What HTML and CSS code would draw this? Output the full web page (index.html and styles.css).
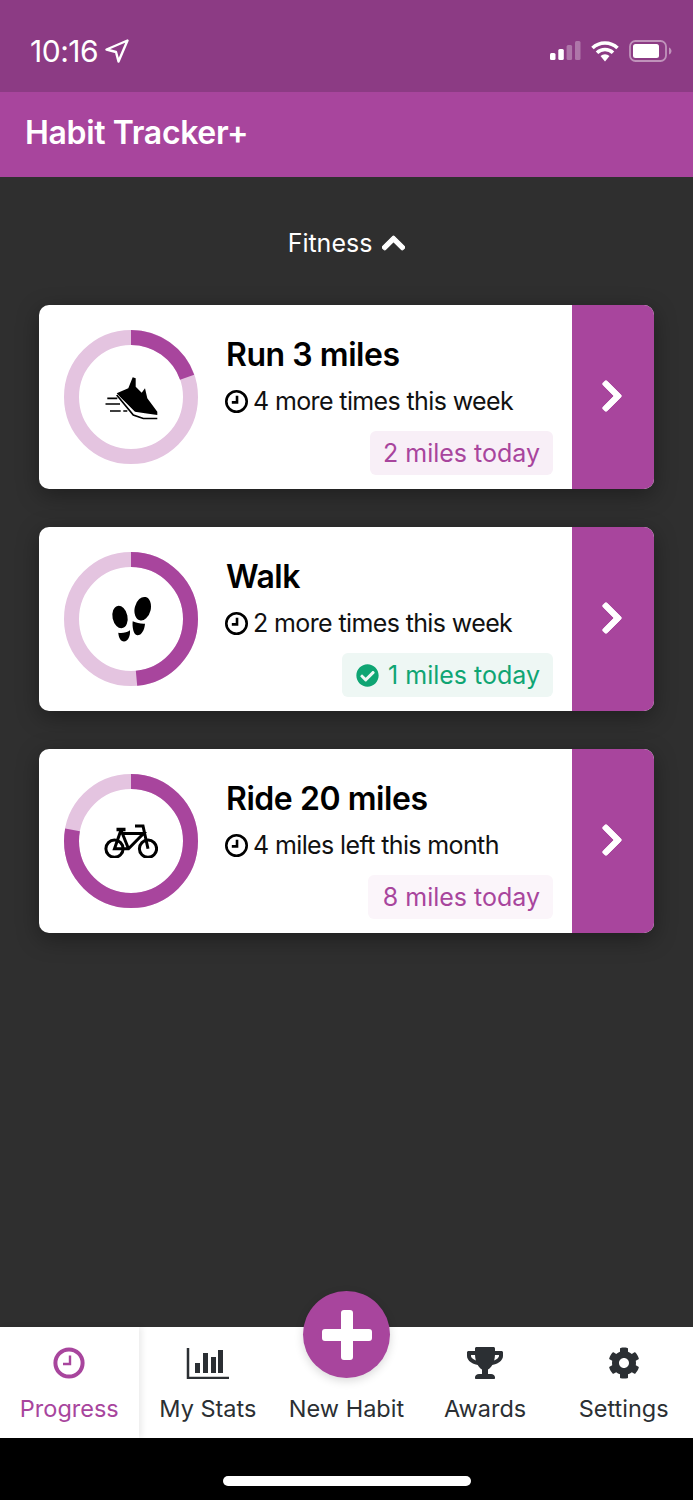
FILE: index.html
```html
<!DOCTYPE html>
<html lang="en">
<head>
    <meta charset="UTF-8">
    <title>Habit Tracker+</title>
    <link rel="stylesheet" href="styles.css">
</head>
<body>
    <div class="status-bar">
        <div class="status-time">
            <span>10:16</span>
            <svg class="location-icon" viewBox="0 0 24 24"><path d="M22.500 1.500 1.500 10.500 11 13 13.500 22.500z"/></svg>
        </div>
        <div class="status-icons">
            <svg class="signal-icon" viewBox="0 0 31 20">
                <rect x="0" y="12" width="5.500" height="7" rx="1.500" fill="#fff"/>
                <rect x="8.300" y="8" width="5.500" height="11" rx="1.500" fill="#fff"/>
                <rect x="16.600" y="4" width="5.500" height="15" rx="1.500" fill="#fff" opacity="0.3"/>
                <rect x="25" y="0" width="5.500" height="19" rx="1.500" fill="#fff" opacity="0.3"/>
            </svg>
            <svg class="wifi-icon" viewBox="0 0 28 22">
                <path d="M1.500 8a18 18 0 0 1 25 0M6 12.700a11.500 11.500 0 0 1 16 0" fill="none" stroke="#fff" stroke-width="3.600"/>
                <path d="M9.500 16a7 7 0 0 1 9 0L14 21.500z" fill="#fff"/>
            </svg>
            <svg class="battery-icon" viewBox="0 0 43 24">
                <rect x="1" y="2" width="36" height="20" rx="5.500" fill="none" stroke="#fff" stroke-opacity="0.45" stroke-width="1.800"/>
                <rect x="4" y="5" width="26" height="14" rx="2.500" fill="#fff"/>
                <path d="M40 8.500c1.500.5 2.500 2 2.500 3.500s-1 3-2.500 3.500z" fill="#fff" opacity="0.45"/>
            </svg>
        </div>
    </div>

    <header class="app-bar">Habit Tracker+</header>

    <main class="content">
        <div class="category">
            <span>Fitness</span>
            <svg class="category-arrow" viewBox="0 0 448 512"><path d="M240.971 130.524l194.343 194.343c9.373 9.373 9.373 24.569 0 33.941l-22.667 22.667c-9.357 9.357-24.522 9.375-33.901.04L224 227.495 69.255 381.516c-9.379 9.335-24.544 9.317-33.901-.04l-22.667-22.667c-9.373-9.373-9.373-24.569 0-33.941L207.03 130.525c9.372-9.373 24.568-9.373 33.941-.001z"/></svg>
        </div>

        <div class="habit-card">
            <div class="habit-main">
                <div class="ring">
                    <svg class="ring-svg" viewBox="0 0 136 136">
                        <circle class="ring-back" cx="68" cy="68" r="59.500"/>
                        <circle class="ring-fill" cx="68" cy="68" r="59.500" pathLength="100" stroke-dasharray="19.600 100"/>
                    </svg>
                    <svg class="shoe-icon" viewBox="0 0 54 43">
                        <path d="M11.700 16.300 23.300 11.300 27.700.3 30.700 1.300 30.700 9.700 36.700 15.700 40 11.300 42.300 21.300 52.300 34.700 52.300 38 40 36.300 30 34.700 15 19.700z"/>
                        <path d="M11.700 18 28.300 38 38.300 41.500H52.300M2.300 21.300H12.300M.5 27H15M5 34H15.700M18.300 34H22.300" fill="none" stroke="#000" stroke-width="1.700"/>
                    </svg>
                </div>
                <div class="habit-info">
                    <div class="habit-title">Run 3 miles</div>
                    <div class="habit-sub">
                        <svg class="clock-icon" viewBox="0 0 24 24"><circle cx="12" cy="12" r="9.800"/><path d="M12.500 6.500V12.800H7.500"/></svg>
                        <span>4 more times this week</span>
                    </div>
                    <div class="habit-today"><span class="today-pill">2 miles today</span></div>
                </div>
            </div>
            <div class="habit-go">
                <svg class="go-arrow" viewBox="0 0 320 512"><path d="M285.476 272.971L91.132 467.314c-9.373 9.373-24.569 9.373-33.941 0l-22.667-22.667c-9.357-9.357-9.375-24.522-.04-33.901L188.505 256 34.484 101.255c-9.335-9.379-9.317-24.544.04-33.901l22.667-22.667c9.373-9.373 24.569-9.373 33.941 0L285.475 239.03c9.373 9.372 9.373 24.568.001 33.941z"/></svg>
            </div>
        </div>

        <div class="habit-card">
            <div class="habit-main">
                <div class="ring">
                    <svg class="ring-svg" viewBox="0 0 136 136">
                        <circle class="ring-back" cx="68" cy="68" r="59.500"/>
                        <circle class="ring-fill" cx="68" cy="68" r="59.500" pathLength="100" stroke-dasharray="48.500 100"/>
                    </svg>
                    <svg class="steps-icon" viewBox="0 0 42 46">
                        <ellipse cx="10" cy="21" rx="7.500" ry="11.300" transform="rotate(-12 10 21)"/>
                        <path d="M8.300 36.700C12 37.500 17 36.500 20 34.300 20.500 40 18 45.500 14 45.500 10.500 45.500 8.500 41 8.300 36.700z"/>
                        <ellipse cx="32.700" cy="12.700" rx="8" ry="12" transform="rotate(14 32.700 12.700)"/>
                        <path d="M22.700 25.300C26.500 27 31 28 35 27.700 34.500 34 31.500 39.500 27.300 39.300 23.500 39 22 31 22.700 25.300z"/>
                    </svg>
                </div>
                <div class="habit-info">
                    <div class="habit-title">Walk</div>
                    <div class="habit-sub">
                        <svg class="clock-icon" viewBox="0 0 24 24"><circle cx="12" cy="12" r="9.800"/><path d="M12.500 6.500V12.800H7.500"/></svg>
                        <span>2 more times this week</span>
                    </div>
                    <div class="habit-today">
                        <span class="today-pill done">
                            <svg class="check-icon" viewBox="0 0 512 512"><path d="M504 256c0 136.967-111.033 248-248 248S8 392.967 8 256 119.033 8 256 8s248 111.033 248 248zM227.314 387.314l184-184c6.248-6.248 6.248-16.379 0-22.627l-22.627-22.627c-6.248-6.249-16.379-6.249-22.628 0L216 308.118l-70.059-70.059c-6.248-6.248-16.379-6.248-22.628 0l-22.627 22.627c-6.248 6.248-6.248 16.379 0 22.627l104 104c6.249 6.249 16.379 6.249 22.628.001z"/></svg>
                            1 miles today
                        </span>
                    </div>
                </div>
            </div>
            <div class="habit-go">
                <svg class="go-arrow" viewBox="0 0 320 512"><path d="M285.476 272.971L91.132 467.314c-9.373 9.373-24.569 9.373-33.941 0l-22.667-22.667c-9.357-9.357-9.375-24.522-.04-33.901L188.505 256 34.484 101.255c-9.335-9.379-9.317-24.544.04-33.901l22.667-22.667c9.373-9.373 24.569-9.373 33.941 0L285.475 239.03c9.373 9.372 9.373 24.568.001 33.941z"/></svg>
            </div>
        </div>

        <div class="habit-card">
            <div class="habit-main">
                <div class="ring">
                    <svg class="ring-svg" viewBox="0 0 136 136">
                        <circle class="ring-back" cx="68" cy="68" r="59.500"/>
                        <circle class="ring-fill" cx="68" cy="68" r="59.500" pathLength="100" stroke-dasharray="78 100"/>
                    </svg>
                    <svg class="bike-icon" viewBox="0 0 54 34">
                        <g fill="none" stroke="#000" stroke-width="3">
                            <circle cx="10.500" cy="24.700" r="8.600"/>
                            <circle cx="44" cy="24.700" r="8.600"/>
                            <path d="M17 6 10.500 24.700H24.500L39.500 9.500H18M17 6 24.500 24.700M31 2H39L44 24.700"/>
                            <path d="M12.500 5.500H21.500" stroke-width="3.600"/>
                        </g>
                    </svg>
                </div>
                <div class="habit-info">
                    <div class="habit-title">Ride 20 miles</div>
                    <div class="habit-sub">
                        <svg class="clock-icon" viewBox="0 0 24 24"><circle cx="12" cy="12" r="9.800"/><path d="M12.500 6.500V12.800H7.500"/></svg>
                        <span>4 miles left this month</span>
                    </div>
                    <div class="habit-today"><span class="today-pill pale">8 miles today</span></div>
                </div>
            </div>
            <div class="habit-go">
                <svg class="go-arrow" viewBox="0 0 320 512"><path d="M285.476 272.971L91.132 467.314c-9.373 9.373-24.569 9.373-33.941 0l-22.667-22.667c-9.357-9.357-9.375-24.522-.04-33.901L188.505 256 34.484 101.255c-9.335-9.379-9.317-24.544.04-33.901l22.667-22.667c9.373-9.373 24.569-9.373 33.941 0L285.475 239.03c9.373 9.372 9.373 24.568.001 33.941z"/></svg>
            </div>
        </div>
    </main>

    <nav class="tab-bar">
        <div class="tab active">
            <svg class="tab-icon" viewBox="0 0 32 32"><circle cx="16" cy="16" r="13.600" fill="none" stroke="currentColor" stroke-width="4"/><path d="M17 8.500V17H10" fill="none" stroke="currentColor" stroke-width="2.400"/></svg>
            <span>Progress</span>
        </div>
        <div class="tab">
            <svg class="tab-icon stats" viewBox="0 0 44 32"><path d="M2 1V31H43" fill="none" stroke="currentColor" stroke-width="2.500"/><rect x="9" y="16" width="5" height="10"/><rect x="17" y="6" width="5" height="20"/><rect x="25" y="10" width="5" height="16"/><rect x="32" y="3" width="5" height="23"/></svg>
            <span>My Stats</span>
        </div>
        <div class="tab">
            <div class="add-button">
                <svg class="add-icon" viewBox="0 0 52 52"><path d="M20 4a3 3 0 0 1 3-3h6a3 3 0 0 1 3 3v16h16a3 3 0 0 1 3 3v6a3 3 0 0 1-3 3H32v16a3 3 0 0 1-3 3h-6a3 3 0 0 1-3-3V32H4a3 3 0 0 1-3-3v-6a3 3 0 0 1 3-3h16z"/></svg>
            </div>
            <span>New Habit</span>
        </div>
        <div class="tab">
            <svg class="tab-icon trophy" viewBox="0 0 576 512"><path d="M552 64H448V24c0-13.300-10.700-24-24-24H152c-13.300 0-24 10.700-24 24v40H24C10.700 64 0 74.700 0 88v56c0 35.700 22.500 72.400 61.900 100.700 31.500 22.700 69.800 37.100 110 41.700C203.300 338.500 240 360 240 360v72h-48c-35.300 0-64 20.700-64 56v12c0 6.600 5.400 12 12 12h296c6.600 0 12-5.400 12-12v-12c0-35.300-28.700-56-64-56h-48v-72s36.700-21.500 68.100-73.600c40.300-4.600 78.600-19 110-41.700 39.300-28.300 61.900-65 61.900-100.700V88c0-13.300-10.700-24-24-24zM99.300 192.800C74.900 175.200 64 155.600 64 144v-16h64.200c1 32.600 5.800 61.200 12.800 86.200-15.100-5.200-29.200-12.400-41.700-21.400zM512 144c0 16.100-17.700 36.100-35.300 48.800-12.500 9-26.700 16.200-41.800 21.400 7-25 11.800-53.600 12.800-86.200H512v16z"/></svg>
            <span>Awards</span>
        </div>
        <div class="tab">
            <svg class="tab-icon" viewBox="0 0 512 512"><path d="M487.400 315.700l-42.600-24.600c4.300-23.200 4.300-47 0-70.200l42.600-24.600c4.900-2.800 7.100-8.600 5.500-14-11.100-35.600-30-67.800-54.700-94.600-3.800-4.100-10-5.100-14.800-2.300L380.800 110c-17.900-15.400-38.500-27.300-60.800-35.100V25.800c0-5.600-3.900-10.500-9.400-11.700-36.700-8.200-74.300-7.800-109.200 0-5.500 1.200-9.400 6.100-9.400 11.700V75c-22.200 7.900-42.800 19.800-60.800 35.100L88.700 85.500c-4.900-2.800-11-1.900-14.800 2.300-24.700 26.700-43.600 58.900-54.700 94.600-1.700 5.400.6 11.200 5.500 14L67.300 221c-4.300 23.200-4.300 47 0 70.200l-42.600 24.600c-4.900 2.800-7.100 8.600-5.500 14 11.100 35.600 30 67.800 54.700 94.600 3.800 4.100 10 5.100 14.800 2.300l42.600-24.600c17.900 15.400 38.500 27.300 60.800 35.100v49.200c0 5.600 3.900 10.500 9.400 11.700 36.700 8.200 74.300 7.800 109.200 0 5.500-1.200 9.400-6.100 9.400-11.700v-49.200c22.200-7.900 42.800-19.800 60.800-35.100l42.600 24.600c4.900 2.800 11 1.900 14.800-2.300 24.700-26.700 43.600-58.900 54.700-94.600 1.500-5.500-.7-11.300-5.600-14.100zM256 336c-44.100 0-80-35.900-80-80s35.900-80 80-80 80 35.900 80 80-35.900 80-80 80z"/></svg>
            <span>Settings</span>
        </div>
    </nav>

    <div class="home-bar"><div class="home-indicator"></div></div>
</body>
</html>
```

FILE: styles.css
```css
* {
    box-sizing: border-box;
}

body {
    margin: 0;
    height: 1500px;
    display: flex;
    flex-direction: column;
    font-family: Inter, "Liberation Sans", sans-serif;
    background-color: #2f2f2f;
    overflow: hidden;
}

.status-bar {
    height: 92px;
    padding: 9px 21px 0 30px;
    display: flex;
    align-items: center;
    justify-content: space-between;
    background-color: #8c3b84;
    color: white;
}

.status-time {
    display: flex;
    align-items: center;
    gap: 7px;
    font-size: 30px;
    font-weight: 400;
    letter-spacing: -0.5px;
}

.location-icon {
    width: 24px;
    height: 24px;
    fill: none;
    stroke: white;
    stroke-width: 2.400;
    stroke-linejoin: round;
}

.status-icons {
    display: flex;
    align-items: center;
    gap: 10px;
}

.signal-icon {
    width: 31px;
    height: 20px;
}

.wifi-icon {
    width: 28px;
    height: 22px;
}

.battery-icon {
    width: 43px;
    height: 24px;
}

.app-bar {
    height: 85px;
    padding: 0 0 4px 25px;
    display: flex;
    align-items: center;
    background-color: #a8459d;
    color: white;
    font-size: 32px;
    font-weight: 600;
    letter-spacing: -0.35px;
}

.content {
    flex: 1;
    padding: 0 39px;
}

.category {
    height: 128px;
    padding-top: 4px;
    display: flex;
    align-items: center;
    justify-content: center;
    gap: 10px;
    color: white;
    font-size: 25px;
}

.category-arrow {
    width: 23px;
    height: 26px;
    fill: white;
    stroke: white;
    stroke-width: 24;
}

.habit-card {
    height: 184px;
    margin-bottom: 38px;
    display: flex;
    background: white;
    border-radius: 10px;
    overflow: hidden;
    box-shadow: 0 6px 22px rgba(0,0,0,0.35);
}

.habit-main {
    flex: 1;
    display: flex;
    padding-left: 24px;
    padding-right: 19px;
}

.ring {
    position: relative;
    width: 136px;
    height: 136px;
    margin-top: 24px;
    flex-shrink: 0;
}

.ring-svg {
    width: 136px;
    height: 136px;
}

.ring-back,
.ring-fill {
    fill: none;
    stroke-width: 15;
}

.ring-back {
    stroke: #e4c4e0;
}

.ring-fill {
    stroke: #a8459d;
    transform: rotate(-90deg);
    transform-origin: 68px 68px;
}

.shoe-icon,
.steps-icon,
.bike-icon {
    position: absolute;
}

.shoe-icon {
    left: 42px;
    top: 48px;
    width: 54px;
    height: 43px;
}

.steps-icon {
    left: 47px;
    top: 45px;
    width: 42px;
    height: 46px;
}

.bike-icon {
    left: 41px;
    top: 51px;
    width: 54px;
    height: 34px;
}

.habit-info {
    flex: 1;
    padding-left: 27px;
}

.habit-title {
    margin-top: 31px;
    height: 38px;
    line-height: 38px;
    font-size: 32px;
    font-weight: 600;
    color: black;
    letter-spacing: -0.45px;
}

.habit-sub {
    margin-top: 10px;
    height: 34px;
    display: flex;
    align-items: center;
    gap: 4px;
    font-size: 25px;
    color: #111;
    letter-spacing: -0.62px;
}

.clock-icon {
    width: 25px;
    height: 25px;
    margin-left: -2px;
    fill: none;
    stroke: black;
    stroke-width: 2.500;
}

.habit-today {
    margin-top: 13px;
    display: flex;
    justify-content: flex-end;
}

.today-pill {
    height: 44px;
    padding: 0 13px;
    display: flex;
    align-items: center;
    gap: 8px;
    border-radius: 6px;
    background-color: #f8eff7;
    color: #a8459d;
    font-size: 25px;
}

.today-pill.pale {
    background-color: #fbf5fa;
    padding-left: 15px;
}

.today-pill.done {
    background-color: #eef7f4;
    color: #0fa573;
    padding-left: 14px;
    gap: 9px;
}

.check-icon {
    width: 23px;
    height: 23px;
    fill: #0fa573;
}

.habit-go {
    width: 82px;
    padding-bottom: 2px;
    display: flex;
    align-items: center;
    justify-content: center;
    background-color: #a8459d;
}

.go-arrow {
    width: 26px;
    height: 36px;
    margin-left: -3px;
    fill: white;
    stroke: white;
    stroke-width: 12;
}

.tab-bar {
    height: 111px;
    display: flex;
    background: white;
}

.tab {
    position: relative;
    flex: 1;
    padding-top: 20px;
    display: flex;
    flex-direction: column;
    align-items: center;
    gap: 15px;
    color: #2b2f33;
    font-size: 23.500px;
}

.tab.active {
    color: #a8459d;
    box-shadow: 3px 0 6px rgba(0,0,0,0.08);
}

.tab-icon {
    width: 32px;
    height: 32px;
    fill: currentColor;
}

.tab-icon.stats {
    width: 44px;
}

.tab-icon.trophy {
    width: 36px;
}

.add-button {
    position: absolute;
    left: 26px;
    top: -36px;
    width: 87px;
    height: 87px;
    display: flex;
    align-items: center;
    justify-content: center;
    border-radius: 50%;
    background-color: #a8459d;
    box-shadow: 0 3px 10px rgba(0,0,0,0.15);
}

.add-icon {
    width: 52px;
    height: 52px;
    fill: white;
}

.tab:nth-child(3) span {
    margin-top: 47px;
}

.home-bar {
    height: 62px;
    padding-top: 38px;
    display: flex;
    justify-content: center;
    background: black;
}

.home-indicator {
    width: 248px;
    height: 10px;
    border-radius: 5px;
    background: white;
}
```
